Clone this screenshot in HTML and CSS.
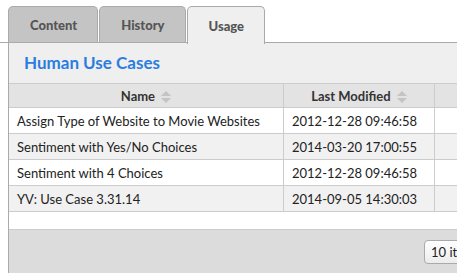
FILE: index.html
```html
<!DOCTYPE html>
<html lang="en">
<head>
    <meta charset="UTF-8">
    <meta name="viewport" content="width=device-width, initial-scale=1.0">
    <title>Human Use Cases</title>
    <link rel="stylesheet" href="styles.css">
</head>
<body>
    <div class="tabs">
        <div class="tab">Content</div>
        <div class="tab">History</div>
        <div class="tab active">Usage</div>
    </div>

    <div class="panel">
        <h2 class="panel-title">Human Use Cases</h2>

        <table class="grid">
            <thead>
                <tr>
                    <th class="col-name">Name <span class="sort"></span></th>
                    <th class="col-date">Last Modified <span class="sort"></span></th>
                    <th class="col-extra"></th>
                </tr>
            </thead>
            <tbody>
                <tr>
                    <td>Assign Type of Website to Movie Websites</td>
                    <td>2012-12-28 09:46:58</td>
                    <td></td>
                </tr>
                <tr class="alt">
                    <td>Sentiment with Yes/No Choices</td>
                    <td>2014-03-20 17:00:55</td>
                    <td></td>
                </tr>
                <tr>
                    <td>Sentiment with 4 Choices</td>
                    <td>2012-12-28 09:46:58</td>
                    <td></td>
                </tr>
                <tr class="alt">
                    <td>YV: Use Case 3.31.14</td>
                    <td>2014-09-05 14:30:03</td>
                    <td></td>
                </tr>
            </tbody>
        </table>

        <div class="grid-space"></div>

        <div class="pager">
            <button class="page-size">10 items per page</button>
        </div>
    </div>
</body>
</html>
```

FILE: styles.css
```css
body {
    margin: 0;
    background: #ffffff;
    font-family: Lato, "Open Sans", sans-serif;
    font-size: 13px;
    color: #222;
    overflow: hidden;
}

/* tab strip */
.tabs {
    display: flex;
    padding-left: 8px;
    margin-top: 6px;
    border-bottom: 1px solid #aaa;
    height: 36px;
}

.tab {
    display: flex;
    align-items: center;
    padding: 0 20px 0 21px;
    margin-right: 1px;
    background: #c4c4c4;
    border: 1px solid #aaa;
    border-bottom: none;
    border-radius: 5px 5px 0 0;
    color: #555;
    font-weight: 900;
    font-size: 13px;
}

.tab.active {
    background: #efefef;
    height: 37px;
}

/* panel under the tabs */
.panel {
    margin-left: 8px;
    background: #efefef;
    border-left: 1px solid #aaa;
    width: 448px;
    overflow: hidden;
}

.panel-title {
    margin: 0;
    height: 40px;
    padding-left: 15px;
    line-height: 40px;
    font-size: 17px;
    font-weight: bold;
    color: #2b7de0;
}

.grid {
    border-collapse: collapse;
    background: #fff;
    table-layout: fixed;
    width: 540px;
}

.grid th,
.grid td {
    border: 1px solid #ccc;
    height: 25px;
    padding: 0 8px;
    white-space: nowrap;
    overflow: hidden;
}

.grid th {
    background: #e3e3e3;
    color: #333;
    font-weight: bold;
    font-size: 13px;
    text-align: center;
    height: 23px;
}

.grid td:first-child,
.grid th:first-child {
    border-left: none;
}

.col-name { width: 258px; }
.col-date { width: 134px; }
.col-extra { width: 100px; }

.grid tr.alt td {
    background: #f1f1f1;
}

/* sort arrows */
.sort {
    display: inline-block;
    position: relative;
    width: 10px;
    height: 12px;
    vertical-align: -2px;
    margin-left: 3px;
}

.sort::before,
.sort::after {
    content: "";
    position: absolute;
    left: 0;
    border-left: 5px solid transparent;
    border-right: 5px solid transparent;
}

.sort::before {
    top: 0;
    border-bottom: 5px solid #c4c4c4;
}

.sort::after {
    bottom: 0;
    border-top: 5px solid #c4c4c4;
}

.grid-space {
    height: 17px;
    background: #fff;
}

.pager {
    background: #dcdcdc;
    border-top: 1px solid #ccc;
    height: 44px;
    padding-left: 415px;
    padding-top: 10px;
    box-sizing: border-box;
    overflow: hidden;
}

.page-size {
    height: 24px;
    padding: 0 6px;
    font-family: Lato, "Open Sans", sans-serif;
    font-size: 13px;
    color: #222;
    background: linear-gradient(#ffffff, #ececec);
    border: 1px solid #aaa;
    border-radius: 4px;
    white-space: nowrap;
}
```
